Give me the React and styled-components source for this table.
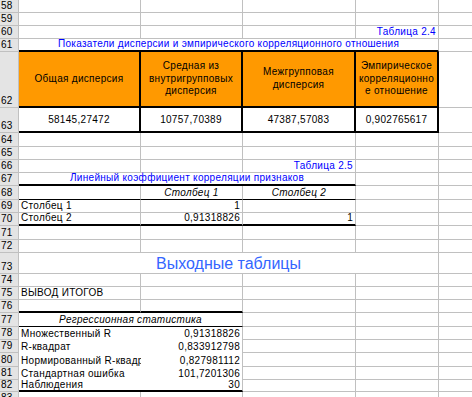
import React from 'react'
import styled, { createGlobalStyle } from 'styled-components'

const GRID = '#c0c0c0'
const W = { A: 122, B: 102, C: 113, D: 83, E: 33 }

const GlobalStyle = createGlobalStyle`
    html, body {
        margin: 0;
        padding: 0;
        background: #fff;
        overflow: hidden;
    }
    body {
        font-family: "Liberation Sans", Arial, sans-serif;
        font-size: 10px;
        color: #000;
    }
`;

const borderOf = (v) => {
    if (v === 'thick') return '2px solid #000'
    if (v === 'thin') return '1px solid #000'
    if (v === 'none') return 'none'
    return `1px solid ${GRID}`
}

const Sheet = styled.div`
    width: 472px;
    height: 397px;
    overflow: hidden;
    display: flex;
    flex-direction: column;
`;

const Row = styled.div`
    display: flex;
    flex: none;
    height: ${props => props.$h}px;
`;

const RowHead = styled.div`
    flex: none;
    width: 19px;
    box-sizing: border-box;
    background: #e4e4e4;
    border-right: 1px solid ${GRID};
    border-bottom: 1px solid ${GRID};
    display: flex;
    align-items: flex-end;
    padding-left: 1px;
    line-height: 12px;
    letter-spacing: 0.3px;
`;

const Cell = styled.div`
    flex: none;
    width: ${props => props.$w}px;
    box-sizing: border-box;
    border-right: ${props => borderOf(props.$br)};
    border-bottom: ${props => borderOf(props.$bb)};
    background: ${props => props.$bg || '#fff'};
    display: flex;
    align-items: ${props => props.$mid ? 'center' : 'flex-end'};
    justify-content: ${props => props.$al === 'right' ? 'flex-end' : props.$al === 'center' ? 'center' : 'flex-start'};
    padding: 0 2px;
    line-height: ${props => props.$lh || 12}px;
    letter-spacing: 0.3px;
    white-space: nowrap;
    overflow-x: clip;
    overflow-y: visible;
    color: ${props => props.$color || '#000'};
    font-style: ${props => props.$it ? 'italic' : 'normal'};
`;

const BigTitle = styled(Cell)`
    font-size: 16px;
    line-height: 18px;
    letter-spacing: 0;
    color: #3366ff;
`;

const HeadText = styled.span`
    white-space: normal;
    text-align: center;
    line-height: 12.7px;
`;

const Blank = ({ n, h }) => (
    <Row $h={h}>
        <RowHead>{n}</RowHead>
        <Cell $w={W.A} />
        <Cell $w={W.B} />
        <Cell $w={W.C} />
        <Cell $w={W.D} />
        <Cell $w={W.E} $br='none' />
    </Row>
)

// regression table rows: white fill, so no gridlines inside A:B
const Stat = ({ n, h, label, value, last }) => (
    <Row $h={h}>
        <RowHead>{n}</RowHead>
        <Cell $w={W.A} $br='none' $bb={last ? 'thick' : 'none'} $lh={last ? 10 : 12}>{label}</Cell>
        <Cell $w={W.B} $al='right' $bb={last ? 'thick' : 'none'} $lh={last ? 10 : 12}>{value}</Cell>
        <Cell $w={W.C} />
        <Cell $w={W.D} />
        <Cell $w={W.E} $br='none' />
    </Row>
)

const App = () => {
    return (
        <>
            <GlobalStyle />
            <Sheet>
                <Blank n={58} h={13} />
                <Blank n={59} h={13} />
                <Row $h={13}>
                    <RowHead>60</RowHead>
                    <Cell $w={W.A} />
                    <Cell $w={W.B} />
                    <Cell $w={W.C} />
                    <Cell $w={W.D} $al='right' $color='#0000ff'>Таблица 2.4</Cell>
                    <Cell $w={W.E} $br='none' />
                </Row>
                <Row $h={13}>
                    <RowHead>61</RowHead>
                    <Cell $w={W.A + W.B + W.C + W.D} $al='center' $color='#0000ff' $bb='thick'>
                        Показатели дисперсии и эмпирического корреляционного отношения
                    </Cell>
                    <Cell $w={W.E} $br='none' />
                </Row>
                <Row $h={56}>
                    <RowHead>62</RowHead>
                    <Cell $w={W.A} $bg='#ff9900' $al='center' $mid $br='thick' $bb='thick'>
                        <HeadText>Общая дисперсия</HeadText>
                    </Cell>
                    <Cell $w={W.B} $bg='#ff9900' $al='center' $mid $br='thick' $bb='thick'>
                        <HeadText>Средная из<br />внутригрупповых<br />дисперсия</HeadText>
                    </Cell>
                    <Cell $w={W.C} $bg='#ff9900' $al='center' $mid $br='thick' $bb='thick'>
                        <HeadText>Межгрупповая<br />дисперсия</HeadText>
                    </Cell>
                    <Cell $w={W.D} $bg='#ff9900' $al='center' $mid $br='thick' $bb='thick'>
                        <HeadText>Эмпирическое<br />корреляционно<br />е отношение</HeadText>
                    </Cell>
                    <Cell $w={W.E} $br='none' />
                </Row>
                <Row $h={25}>
                    <RowHead>63</RowHead>
                    <Cell $w={W.A} $al='center' $mid $br='thick' $bb='thick'>58145,27472</Cell>
                    <Cell $w={W.B} $al='center' $mid $br='thick' $bb='thick'>10757,70389</Cell>
                    <Cell $w={W.C} $al='center' $mid $br='thick' $bb='thick'>47387,57083</Cell>
                    <Cell $w={W.D} $al='center' $mid $br='thick' $bb='thick'>0,902765617</Cell>
                    <Cell $w={W.E} $br='none' />
                </Row>
                <Blank n={64} h={14} />
                <Blank n={65} h={13} />
                <Row $h={13}>
                    <RowHead>66</RowHead>
                    <Cell $w={W.A} />
                    <Cell $w={W.B} />
                    <Cell $w={W.C} $al='right' $color='#0000ff'>Таблица 2.5</Cell>
                    <Cell $w={W.D} />
                    <Cell $w={W.E} $br='none' />
                </Row>
                <Row $h={13}>
                    <RowHead>67</RowHead>
                    <Cell $w={W.A + W.B + W.C} $al='center' $color='#0000ff' $bb='thick'>
                        Линейный коэффициент корреляции признаков
                    </Cell>
                    <Cell $w={W.D} />
                    <Cell $w={W.E} $br='none' />
                </Row>
                <Row $h={14}>
                    <RowHead>68</RowHead>
                    <Cell $w={W.A} $bb='thin' />
                    <Cell $w={W.B} $al='center' $it $bb='thin'>Столбец 1</Cell>
                    <Cell $w={W.C} $al='center' $it $bb='thin'>Столбец 2</Cell>
                    <Cell $w={W.D} />
                    <Cell $w={W.E} $br='none' />
                </Row>
                <Row $h={13}>
                    <RowHead>69</RowHead>
                    <Cell $w={W.A}>Столбец 1</Cell>
                    <Cell $w={W.B} $al='right'>1</Cell>
                    <Cell $w={W.C} />
                    <Cell $w={W.D} />
                    <Cell $w={W.E} $br='none' />
                </Row>
                <Row $h={13}>
                    <RowHead>70</RowHead>
                    <Cell $w={W.A} $bb='thick'>Столбец 2</Cell>
                    <Cell $w={W.B} $al='right' $bb='thick'>0,91318826</Cell>
                    <Cell $w={W.C} $al='right' $bb='thick'>1</Cell>
                    <Cell $w={W.D} />
                    <Cell $w={W.E} $br='none' />
                </Row>
                <Blank n={71} h={14} />
                <Blank n={72} h={13} />
                <Row $h={21}>
                    <RowHead>73</RowHead>
                    <BigTitle $w={W.A + W.B + W.C + W.D} $al='center'>Выходные таблицы</BigTitle>
                    <Cell $w={W.E} $br='none' />
                </Row>
                <Blank n={74} h={13} />
                <Row $h={13}>
                    <RowHead>75</RowHead>
                    <Cell $w={W.A}>ВЫВОД ИТОГОВ</Cell>
                    <Cell $w={W.B} />
                    <Cell $w={W.C} />
                    <Cell $w={W.D} />
                    <Cell $w={W.E} $br='none' />
                </Row>
                <Row $h={13}>
                    <RowHead>76</RowHead>
                    <Cell $w={W.A} $bb='thick' />
                    <Cell $w={W.B} $bb='thick' />
                    <Cell $w={W.C} />
                    <Cell $w={W.D} />
                    <Cell $w={W.E} $br='none' />
                </Row>
                <Row $h={14}>
                    <RowHead>77</RowHead>
                    <Cell $w={W.A + W.B} $al='center' $it $bb='thin'>Регрессионная статистика</Cell>
                    <Cell $w={W.C} />
                    <Cell $w={W.D} />
                    <Cell $w={W.E} $br='none' />
                </Row>
                <Stat n={78} h={13} label='Множественный R' value='0,91318826' />
                <Stat n={79} h={13} label='R-квадрат' value='0,833912798' />
                <Stat n={80} h={14} label='Нормированный R-квадрат' value='0,827981112' />
                <Stat n={81} h={13} label='Стандартная ошибка' value='101,7201306' />
                <Stat n={82} h={12} label='Наблюдения' value='30' last />
                <Blank n={83} h={13} />
            </Sheet>
        </>
    )
}

export default App
